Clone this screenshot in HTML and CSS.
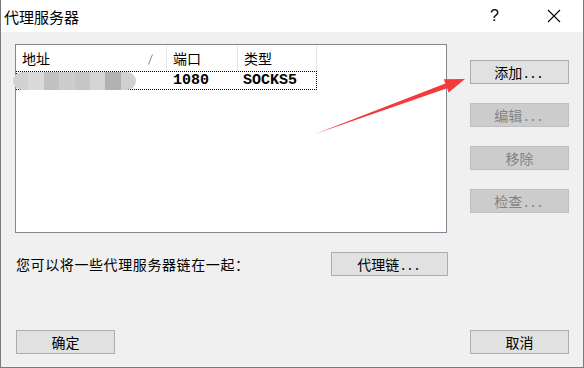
FILE: index.html
```html
<!DOCTYPE html>
<html lang="zh-CN">
<head>
  <meta charset="UTF-8">
  <title>代理服务器</title>
  <link rel="stylesheet" href="styles.css">
</head>
<body>

<div class="window">
  <div class="titlebar">
    <span class="title">代理服务器</span>
    <span class="help">?</span>
    <svg class="close" width="14" height="14" viewBox="0 0 14 14">
      <path d="M1 1 L13 13 M13 1 L1 13" stroke="#000" stroke-width="1.1" fill="none"/>
    </svg>
  </div>

  <div class="content">
    <div class="main">
      <div class="listbox">
        <div class="list-header">
          <div class="col col-addr">地址
            <svg class="sort" width="5" height="11" viewBox="0 0 5 11">
              <path d="M4.5 0.5 L0.5 10.5" stroke="#8a8a8a" stroke-width="1"/>
            </svg>
          </div>
          <div class="col col-port">端口</div>
          <div class="col col-type">类型</div>
        </div>
        <div class="list-row">
          <div class="blur">
            <span></span><span></span><span></span><span></span>
            <span></span><span></span><span></span><span></span>
          </div>
          <div class="col col-addr"></div>
          <div class="col col-port">1080</div>
          <div class="col col-type">SOCKS5</div>
        </div>
      </div>

      <div class="side">
        <button class="btn">添加<span class="dots">...</span></button>
        <button class="btn" disabled>编辑<span class="dots">...</span></button>
        <button class="btn" disabled>移除</button>
        <button class="btn" disabled>检查<span class="dots">...</span></button>
      </div>
    </div>

    <div class="chain-row">
      <span class="label">您可以将一些代理服务器链在一起：</span>
      <button class="btn btn-chain">代理链<span class="dots">...</span></button>
    </div>

    <div class="footer">
      <button class="btn">确定</button>
      <button class="btn">取消</button>
    </div>
  </div>

  <!-- annotation arrow drawn over the dialog -->
  <svg class="arrow" width="584" height="368" viewBox="0 0 584 368">
    <polygon points="315,134 445.3,83.6 443.8,79.3 465,79 448.6,92.5 447.1,88.2" fill="#f43a3a"/>
  </svg>
</div>

</body>
</html>
```

FILE: styles.css
```css
body {
    margin: 0;
    padding: 0;
    background-color: #f0f0f0;
    font-family: "Noto Sans CJK SC", "Noto Sans", sans-serif;
}

.window {
    position: relative;
    width: 584px;
    height: 368px;
    box-sizing: border-box;
    border: 1px solid #7a7a7a;
    border-top: none;
    background-color: #f0f0f0;
    display: flex;
    flex-direction: column;
}

.titlebar {
    height: 32px;
    background-color: #ffffff;
    display: flex;
    align-items: center;
}

.title {
    padding-left: 3px;
    font-size: 15px;
    color: #000;
    flex: 1;
}

.help {
    font-family: "Liberation Sans", sans-serif;
    font-size: 16px;
    color: #000;
    margin-right: 48px;
}

.close {
    margin-right: 22px;
}

.content {
    flex: 1;
    display: flex;
    flex-direction: column;
    padding: 12px 14px 13px 14px;
}

.main {
    display: flex;
}

.listbox {
    width: 432px;
    height: 189px;
    box-sizing: border-box;
    border: 1px solid #828790;
    background-color: #ffffff;
}

.list-header {
    display: flex;
    height: 26px;
    font-size: 14px;
    color: #000;
}

.list-header .col {
    border-right: 1px solid #e5e5e5;
    display: flex;
    align-items: center;
    padding-left: 6px;
    position: relative;
}

.col {
    box-sizing: border-box;
}

.col-addr {
    width: 151px;
}

.col-port {
    width: 71px;
}

.col-type {
    width: 79px;
}

.sort {
    position: absolute;
    right: 13px;
    top: 9px;
}

.list-row {
    position: relative;
    display: flex;
    height: 19px;
    width: 301px;
    box-sizing: border-box;
    border: 1px dotted #000;
    font-family: "Liberation Mono", monospace;
    font-weight: bold;
    font-size: 15px;
    line-height: 17px;
}

.list-row .col {
    padding-left: 6px;
}

.list-row .col-addr {
    width: 150px;
}

.list-row .col-port {
    width: 70px;
}

.blur {
    position: absolute;
    left: -4px;
    top: 0;
    width: 123px;
    height: 18px;
    border-radius: 9px;
    overflow: hidden;
    display: flex;
    filter: blur(0.6px);
}

.blur span {
    flex: 1;
    background-color: #d2d2d2;
}

.blur span:nth-child(2) { background-color: #dadada; }
.blur span:nth-child(3) { background-color: #c1c1c1; }
.blur span:nth-child(4) { background-color: #cdcdcd; }
.blur span:nth-child(5) { background-color: #c6c6c6; }
.blur span:nth-child(6) { background-color: #d4d4d4; }
.blur span:nth-child(7) { background-color: #b2b2b2; }
.blur span:nth-child(8) { background-color: #d0d0d0; }

.side {
    display: flex;
    flex-direction: column;
    gap: 19px;
    margin-left: 23px;
    padding-top: 16px;
}

.btn {
    width: 99px;
    height: 24px;
    box-sizing: border-box;
    border: 1px solid #adadad;
    background-color: #e1e1e1;
    color: #000;
    font-family: "Noto Sans CJK SC", "Noto Sans", sans-serif;
    font-size: 14px;
    padding: 0;
    line-height: 20px;
    cursor: pointer;
}

.btn:disabled {
    background-color: #cccccc;
    border-color: #bfbfbf;
    color: #838383;
    cursor: default;
}

.dots {
    letter-spacing: 3px;
    margin-left: 2px;
}

.chain-row {
    display: flex;
    align-items: center;
    margin-top: 19px;
}

.label {
    font-size: 14px;
    letter-spacing: 0.6px;
    color: #000;
    margin-left: 1px;
    width: 315px;
}

.btn-chain {
    width: 117px;
}

.footer {
    margin-top: auto;
    display: flex;
    justify-content: space-between;
    padding-left: 1px;
}

.arrow {
    position: absolute;
    left: -1px;
    top: 0;
    pointer-events: none;
}
```
